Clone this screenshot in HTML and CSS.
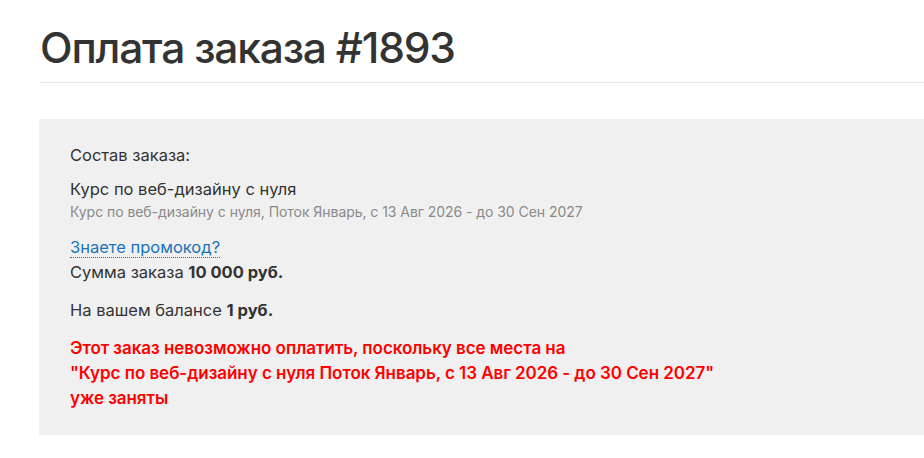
FILE: index.html
```html
<!DOCTYPE html>
<html lang="ru">
<head>
<meta charset="utf-8">
<title>Оплата заказа #1893</title>
<link rel="stylesheet" href="styles.css">
</head>
<body>
<div class="page">
  <h1 class="title">Оплата заказа #1893</h1>
  <div class="order">
    <p class="label">Состав заказа:</p>
    <div class="item">
      <div class="item-name">Курс по веб-дизайну с нуля</div>
      <div class="item-desc">Курс по веб-дизайну с нуля, Поток Январь, с 13 Авг 2026 - до 30 Сен 2027</div>
    </div>
    <div class="promo"><a class="promo-link" href="#">Знаете промокод?</a></div>
    <p class="sum">Сумма заказа <b>10 000 руб.</b></p>
    <p class="balance">На вашем балансе <b>1 руб.</b></p>
    <p class="error">Этот заказ невозможно оплатить, поскольку все места на<br>"Курс по веб-дизайну с нуля Поток Январь, с 13 Авг 2026 - до 30 Сен 2027"<br>уже заняты</p>
  </div>
</div>
</body>
</html>
```
FILE: styles.css
```css
html, body {
  margin: 0;
  padding: 0;
  background: #fff;
}
body {
  font-family: Inter, "Noto Sans", sans-serif;
  color: #333;
  overflow: hidden;
}
.page {
  padding: 0 0 0 39px;
}
.title {
  margin: 0;
  padding: 20px 0 6px 1px;
  font-size: 42.5px;
  line-height: 56px;
  font-weight: 500;
  color: #333;
  letter-spacing: -1.2px;
  border-bottom: 1px solid #e8e8e8;
}
.order {
  margin-top: 36px;
  background: #f0f0f0;
  padding: 24px 31px 24px;
  font-size: 16.5px;
  line-height: 24px;
}
.order p {
  margin: 0;
}
.label {
  margin-bottom: 10px !important;
}
.item-name {
  line-height: 24px;
}
.item-desc {
  font-size: 14px;
  line-height: 21px;
  color: #8a8a8a;
  letter-spacing: -0.05px;
}
.promo {
  margin-top: 13px;
}
.promo-link {
  color: #1a73b8;
  text-decoration: none;
  border-bottom: 1px dotted #1a73b8;
}
.sum {
  margin-top: 1px !important;
}
.balance {
  margin-top: 14px !important;
}
b {
  font-weight: 700;
}
.error {
  margin-top: 14px !important;
  color: #ff0000;
  font-weight: 600;
  font-size: 17px;
  line-height: 25px;
  letter-spacing: -0.05px;
}
```
